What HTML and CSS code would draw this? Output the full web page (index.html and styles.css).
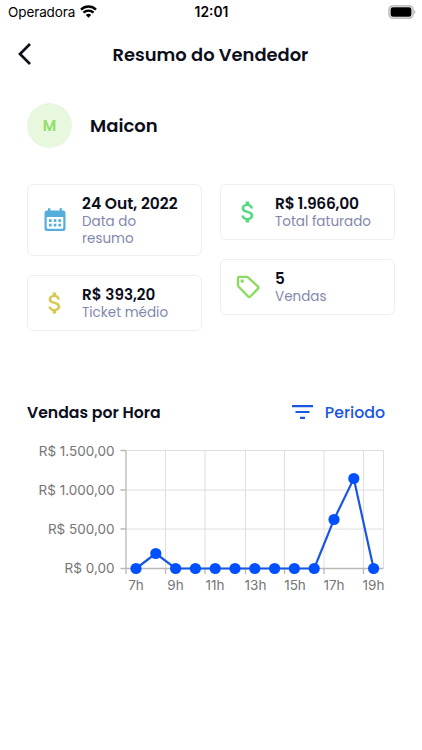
FILE: index.html
```html
<!DOCTYPE html>
<html lang="pt-BR">
<head>
  <meta charset="UTF-8">
  <meta name="viewport" content="width=device-width, initial-scale=1">
  <title>Resumo do Vendedor</title>
  <link rel="stylesheet" href="styles.css">
</head>
<body>

  <!-- barra de status -->
  <div class="status">
    <div class="carrier">
      <span>Operadora</span>
      <svg width="17" height="13" viewBox="0 0 17 13">
        <path d="M1 4.6a10.8 10.8 0 0 1 15 0M3.5 7.6a7.2 7.2 0 0 1 10 0" fill="none" stroke="#000" stroke-width="2.4"/>
        <path d="M8.5 12.8 5.8 10a3.9 3.9 0 0 1 5.4 0z"/>
      </svg>
    </div>
    <span class="clock">12:01</span>
    <svg class="battery" width="28" height="14" viewBox="0 0 28 14">
      <rect x="1" y=".8" width="24" height="12.4" rx="3.6" fill="#fff" stroke="#aaa" stroke-width="1.2"/>
      <rect x="2.6" y="2.3" width="20.8" height="9.4" rx="2.2"/>
      <path d="M26.3 5v4c1.5-.5 1.5-3.5 0-4z" fill="#aaa"/>
    </svg>
  </div>

  <header class="header">
    <svg class="back" width="14" height="24" viewBox="0 0 14 24">
      <path d="M12 2 2 12l10 10" fill="none" stroke="#0d0e1c" stroke-width="2.7"/>
    </svg>
    <h1>Resumo do Vendedor</h1>
  </header>

  <div class="seller">
    <div class="avatar">M</div>
    <h2>Maicon</h2>
  </div>

  <!-- cards -->
  <div class="cards">
    <div class="column">
      <div class="card">
        <svg class="icon" width="26" height="26" viewBox="0 0 26 26">
          <path d="M5 3.5h1V1.300h2.400v2.200h9.200V1.300H20v2.200h1q2.500 0 2.500 2.500v15.500q0 2.500-2.500 2.500H5q-2.500 0-2.500-2.500V6q0-2.500 2.500-2.500z" fill="#55addb"/>
          <path d="M4.700 10h16.600v10.200q0 1.600-1.600 1.600H6.300q-1.600 0-1.600-1.600z" fill="#fff"/>
          <path d="M7 12.200h2.700v2.700H7zM11.700 12.200h2.700v2.700h-2.700zM16.400 12.200h2.700v2.700h-2.700zM7 16.800h2.700v2.700H7zM11.700 16.800h2.700v2.700h-2.700zM16.400 16.800h2.700v2.700h-2.700z" fill="#55addb"/>
        </svg>
        <div class="info">
          <strong class="date">24 Out, 2022</strong>
          <span>Data do<br>resumo</span>
        </div>
      </div>
      <div class="card">
        <svg class="icon money yellow" width="28" height="28" viewBox="0 0 24 24">
          <path d="M11.8 10.9c-2.27-.59-3-1.2-3-2.15 0-1.09 1.010-1.85 2.7-1.85 1.78 0 2.44.85 2.5 2.1h2.210c-.07-1.72-1.12-3.3-3.210-3.810V3h-3v2.160c-1.94.42-3.5 1.68-3.5 3.610 0 2.310 1.910 3.460 4.7 4.130 2.5.6 3 1.480 3 2.410 0 .69-.49 1.79-2.7 1.79-2.060 0-2.870-.92-2.980-2.1h-2.2c.12 2.190 1.760 3.420 3.680 3.830V21h3v-2.150c1.950-.37 3.5-1.5 3.5-3.550 0-2.840-2.430-3.810-4.7-4.4z"/>
        </svg>
        <div class="info">
          <strong class="ticket">R$ 393,20</strong>
          <span>Ticket médio</span>
        </div>
      </div>
    </div>
    <div class="column">
      <div class="card">
        <svg class="icon money green" width="28" height="28" viewBox="0 0 24 24">
          <path d="M11.8 10.9c-2.27-.59-3-1.2-3-2.15 0-1.09 1.010-1.85 2.7-1.85 1.78 0 2.44.85 2.5 2.1h2.210c-.07-1.72-1.12-3.3-3.210-3.810V3h-3v2.160c-1.94.42-3.5 1.68-3.5 3.610 0 2.310 1.910 3.460 4.7 4.130 2.5.6 3 1.480 3 2.410 0 .69-.49 1.79-2.7 1.79-2.060 0-2.870-.92-2.980-2.1h-2.2c.12 2.190 1.760 3.420 3.680 3.830V21h3v-2.150c1.950-.37 3.5-1.5 3.5-3.550 0-2.840-2.430-3.810-4.7-4.4z"/>
        </svg>
        <div class="info">
          <strong class="total">R$ 1.966,00</strong>
          <span>Total faturado</span>
        </div>
      </div>
      <div class="card">
        <svg class="icon" width="26" height="26" viewBox="0 0 26 26">
          <path d="M4.200 2.900h7.600q.7 0 1.200.5l10 9.100q1.100 1.100 0 2.200l-7.700 7.800q-1.100 1.100-2.200 0L3.500 12.500q-.5-.5-.5-1.200V4.100q0-1.200 1.200-1.200z" fill="none" stroke="#8bdc61" stroke-width="2.400"/>
          <circle cx="7.200" cy="7.100" r="1.800" fill="#8bdc61"/>
        </svg>
        <div class="info">
          <strong>5</strong>
          <span>Vendas</span>
        </div>
      </div>
    </div>
  </div>

  <!-- vendas por hora -->
  <div class="chart-header">
    <h3>Vendas por Hora</h3>
    <div class="period">
      <svg width="21" height="14" viewBox="0 0 21 14">
        <path d="M0 1.200h21M3.500 7h14M8 12.800h5" stroke="#1a57e0" stroke-width="2.200"/>
      </svg>
      <span>Periodo</span>
    </div>
  </div>

  <svg class="chart" width="422" height="160" viewBox="0 440 422 160">
    <path class="grid" d="M126 450.5h257.5M126 490h257.5M126 529h257.5M165.5 450.5V568M205 450.5V568M245.5 450.5V568M284.5 450.5V568M324 450.5V568M363.5 450.5V568M383.5 450.5V568"/>
    <path class="axis" d="M126 450.5V574M120.5 450.5h5.5M120.5 490h5.5M120.5 529h5.5M120.5 568.5h263M165.5 568v6M205 568v6M245.5 568v6M284.5 568v6M324 568v6M363.5 568v6"/>
    <g class="labels y">
      <text x="114.500" y="455.5">R$ 1.500,00</text>
      <text x="114.500" y="495">R$ 1.000,00</text>
      <text x="114.500" y="534">R$ 500,00</text>
      <text x="114.500" y="573">R$ 0,00</text>
    </g>
    <g class="labels x">
      <text x="136" y="590">7h</text>
      <text x="175.5" y="590">9h</text>
      <text x="215" y="590">11h</text>
      <text x="255.5" y="590">13h</text>
      <text x="295" y="590">15h</text>
      <text x="334" y="590">17h</text>
      <text x="373.5" y="590">19h</text>
    </g>
    <polyline class="line" points="136,568.5 155.8,553.5 175.6,568.5 314.2,568.5 334,519.5 353.8,478.5 373.6,568.5"/>
    <g class="dots">
      <circle cx="136" cy="568.5" r="5.6"/>
      <circle cx="155.8" cy="553.5" r="5.6"/>
      <circle cx="175.6" cy="568.5" r="5.6"/>
      <circle cx="195.4" cy="568.5" r="5.6"/>
      <circle cx="215.2" cy="568.5" r="5.6"/>
      <circle cx="235" cy="568.5" r="5.6"/>
      <circle cx="254.8" cy="568.5" r="5.6"/>
      <circle cx="274.6" cy="568.5" r="5.6"/>
      <circle cx="294.4" cy="568.5" r="5.6"/>
      <circle cx="314.2" cy="568.5" r="5.6"/>
      <circle cx="334" cy="519.5" r="5.6"/>
      <circle cx="353.8" cy="478.5" r="5.6"/>
      <circle cx="373.6" cy="568.5" r="5.6"/>
    </g>
  </svg>

</body>
</html>
```
FILE: styles.css
```css
* {
  box-sizing: border-box;
}

body {
  font-family: Poppins, Inter, sans-serif;
  background: #fff;
  color: #0d0e1c;
  margin: 0;
}

h1, h2, h3 {
  margin: 0;
  font-weight: 600;
}

svg {
  display: block;
  flex: none;
}

.status {
  display: grid;
  grid-template-columns: 1fr auto 1fr;
  align-items: center;
  height: 23px;
  padding: 0 6px 0 8px;
  font-family: Inter, sans-serif;
  font-size: 13.5px;
  color: #000;
}

.carrier {
  display: flex;
  align-items: center;
  gap: 5px;
  letter-spacing: -0.1px;
}

.clock {
  margin-right: 1px;
  font-size: 13.8px;
  font-weight: 600;
}

.battery {
  justify-self: end;
}

.header {
  display: flex;
  align-items: center;
  height: 60px;
  margin-top: 1px;
  padding-left: 18px;
}

.header h1 {
  margin-left: 80.5px;
  font-size: 17.9px;
}

.seller {
  display: flex;
  align-items: center;
  gap: 18px;
  margin: 19px 27px 0;
}

.seller h2 {
  font-size: 18px;
}

.avatar {
  display: flex;
  align-items: center;
  justify-content: center;
  width: 45px;
  height: 45px;
  border-radius: 50%;
  background: #e8f8df;
  color: #91de68;
  font-size: 15px;
  font-weight: 600;
}

.cards {
  display: flex;
  gap: 18px;
  height: 148px;
  margin: 36px 27px 0;
}

.column {
  flex: 1;
  display: flex;
  flex-direction: column;
  gap: 18.5px;
}

.card {
  display: flex;
  align-items: center;
  min-height: 56px;
  padding: 8.5px 14px;
  border: 1px solid #eeeef1;
  border-radius: 6px;
}

.icon {
  margin-right: 14px;
}

.money {
  margin: 0 13px 0 -1px;
}

.info {
  display: flex;
  flex-direction: column;
  white-space: nowrap;
}

.info strong {
  font-size: 15.2px;
  line-height: 19px;
  font-weight: 600;
}

.info .date {
  font-size: 15.5px;
}

.info .total {
  font-size: 15.5px;
  letter-spacing: -0.3px;
}

.info span {
  font-size: 13.5px;
  line-height: 17px;
  color: #8288ad;
}

.yellow {
  fill: #d9c84f;
}

.green {
  fill: #53d880;
}

.chart-header {
  display: flex;
  align-items: center;
  justify-content: space-between;
  height: 24px;
  margin: 68px 37px 0 27px;
}

.chart-header h3 {
  font-size: 15.7px;
}

.period {
  display: flex;
  align-items: center;
  gap: 12px;
  color: #1a57e0;
  font-size: 15.8px;
  font-weight: 500;
}

.chart {
  margin-top: 16px;
}

.grid {
  fill: none;
  stroke: #dedede;
}

.axis {
  fill: none;
  stroke: #b8b8b8;
  stroke-width: 1.3;
}

.labels {
  font-family: Inter, sans-serif;
  font-size: 13.5px;
  fill: #757575;
}

.y {
  text-anchor: end;
}

.x {
  text-anchor: middle;
}

.line {
  fill: none;
  stroke: #1a57e0;
  stroke-width: 2.2;
}

.dots {
  fill: #0050ff;
}
```
